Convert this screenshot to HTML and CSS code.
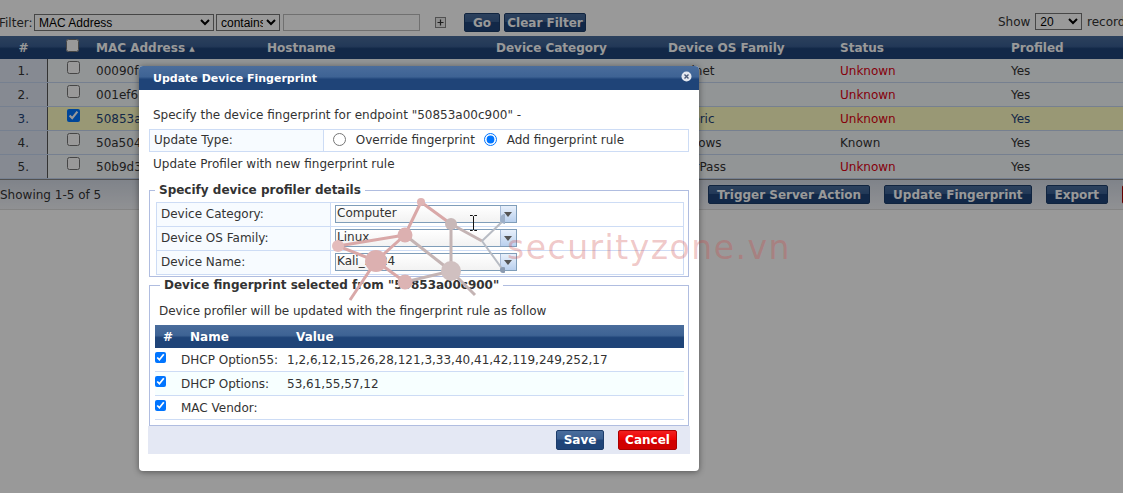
FILE: index.html
```html
<!DOCTYPE html>
<html lang="en">
<head>
    <meta charset="UTF-8">
    <meta name="viewport" content="width=device-width, initial-scale=1.0">
    <title>Endpoints</title>
    <link rel="stylesheet" href="styles.css">
</head>
<body>

    <div class="page">
        <div class="filter-bar">
            <div class="filter-left">
                <label class="filter-label">Filter:</label>
                <select class="sel-field"><option>MAC Address</option></select>
                <select class="sel-op"><option>contains</option></select>
                <input type="text" class="filter-input">
                <span class="plus-btn">
                    <svg width="11" height="11" viewBox="0 0 11 11"><rect x="0.5" y="0.5" width="10" height="10" fill="#eee" stroke="#888"/><path d="M5.5 2.5v6M2.5 5.5h6" stroke="#333" stroke-width="1.2"/></svg>
                </span>
                <button class="btn btn-go">Go</button>
                <button class="btn btn-clear">Clear Filter</button>
            </div>
            <div class="filter-show">Show <select class="sel-show"><option>20</option></select> records</div>
        </div>

        <table class="grid">
            <thead>
                <tr>
                    <th class="col-num">#</th>
                    <th class="col-check"><input type="checkbox"></th>
                    <th class="col-mac">MAC Address <span class="sort">&#9650;</span></th>
                    <th class="col-host">Hostname</th>
                    <th class="col-cat">Device Category</th>
                    <th class="col-os">Device OS Family</th>
                    <th class="col-status">Status</th>
                    <th>Profiled</th>
                </tr>
            </thead>
            <tbody>
                <tr>
                    <td class="num">1.</td><td class="chk"><input type="checkbox"></td><td>00090f</td><td></td><td></td><td class="os-cell">Fortinet</td><td class="unknown">Unknown</td><td>Yes</td>
                </tr>
                <tr>
                    <td class="num">2.</td><td class="chk"><input type="checkbox"></td><td>001ef6</td><td></td><td></td><td></td><td class="unknown">Unknown</td><td>Yes</td>
                </tr>
                <tr class="selected">
                    <td class="num">3.</td><td class="chk"><input type="checkbox" checked></td><td>50853a</td><td></td><td></td><td class="os-cell">Generic</td><td class="unknown">Unknown</td><td>Yes</td>
                </tr>
                <tr>
                    <td class="num">4.</td><td class="chk"><input type="checkbox"></td><td>50a504</td><td></td><td></td><td class="os-cell">Windows</td><td>Known</td><td>Yes</td>
                </tr>
                <tr>
                    <td class="num">5.</td><td class="chk"><input type="checkbox"></td><td>50b9d3</td><td></td><td></td><td class="os-cell">ClearPass</td><td class="unknown">Unknown</td><td>Yes</td>
                </tr>
            </tbody>
        </table>

        <div class="grid-footer">
            <div class="grid-info">Showing 1-5 of 5</div>
            <button class="btn btn-foot">Trigger Server Action</button>
            <button class="btn btn-foot">Update Fingerprint</button>
            <button class="btn btn-foot">Export</button>
            <button class="btn btn-foot btn-delete">Delete</button>
        </div>
    </div>

    <div class="overlay"></div>

    <!-- Update fingerprint dialog -->
    <div class="modal">
        <div class="modal-title">
            <span>Update Device Fingerprint</span>
            <svg class="modal-close" width="11" height="11" viewBox="0 0 11 11"><circle cx="5.5" cy="5.5" r="5" fill="#e4e8f0"/><path d="M3.5 3.5l4 4M7.5 3.5l-4 4" stroke="#4a5a78" stroke-width="1.4"/></svg>
        </div>
        <div class="modal-body">
            <p class="intro">Specify the device fingerprint for endpoint "50853a00c900" -</p>
            <div class="update-type">
                <div class="ut-label">Update Type:</div>
                <div class="ut-value">
                    <label><input type="radio" name="utype"> Override fingerprint</label>
                    <label><input type="radio" name="utype" checked> Add fingerprint rule</label>
                </div>
            </div>
            <p class="update-note">Update Profiler with new fingerprint rule</p>

            <fieldset class="box box-details">
                <legend>Specify device profiler details</legend>
                <div class="detail-table">
                    <div class="detail-row">
                        <div class="detail-label">Device Category:</div>
                        <div class="detail-value"><div class="combo"><span class="combo-text">Computer</span><span class="combo-arrow"></span></div></div>
                    </div>
                    <div class="detail-row">
                        <div class="detail-label">Device OS Family:</div>
                        <div class="detail-value"><div class="combo"><span class="combo-text">Linux</span><span class="combo-arrow"></span></div></div>
                    </div>
                    <div class="detail-row">
                        <div class="detail-label">Device Name:</div>
                        <div class="detail-value"><div class="combo"><span class="combo-text">Kali_2024</span><span class="combo-arrow"></span></div></div>
                    </div>
                </div>
            </fieldset>

            <fieldset class="box box-print">
                <legend>Device fingerprint selected from "50853a00c900"</legend>
                <p class="print-note">Device profiler will be updated with the fingerprint rule as follow</p>
                <div class="print-head">
                    <span class="ph-num">#</span><span class="ph-name">Name</span><span>Value</span>
                </div>
                <div class="print-row">
                    <input type="checkbox" checked><span class="pr-name">DHCP Option55:</span><span>1,2,6,12,15,26,28,121,3,33,40,41,42,119,249,252,17</span>
                </div>
                <div class="print-row">
                    <input type="checkbox" checked><span class="pr-name">DHCP Options:</span><span>53,61,55,57,12</span>
                </div>
                <div class="print-row">
                    <input type="checkbox" checked><span class="pr-name">MAC Vendor:</span><span></span>
                </div>
            </fieldset>

            <div class="modal-actions">
                <button class="btn btn-save">Save</button>
                <button class="btn btn-cancel">Cancel</button>
            </div>
        </div>
    </div>

    <!-- Watermark over the dialog -->
    <div class="watermark">
        <svg class="wm-net" width="200" height="120" viewBox="0 0 200 120">
            <g fill="none" stroke-width="3">
                <path stroke="#d9a8a8" d="M116 6L100 39M116 6L146 28M100 39L33 50M100 39L71 65M71 65L100 86M33 50L71 65M71 65L45 104"/>
                <path stroke="#c4b4b4" d="M146 28L177 45M146 28V75M100 39L146 75M100 86L146 75M146 75L170 99"/>
                <path stroke="#b8bcc4" stroke-width="2" d="M177 45L200 23M177 45L198 74"/>
            </g>
            <circle cx="116" cy="6" r="4" fill="#e0b4b4"/>
            <circle cx="100" cy="39" r="7.5" fill="#dcb0b0"/>
            <circle cx="146" cy="28" r="6" fill="#c8b8b8"/>
            <circle cx="33" cy="50" r="6" fill="#e4bcbc"/>
            <circle cx="71" cy="65" r="11" fill="#dcb0b0"/>
            <circle cx="146" cy="75" r="10" fill="#d0c0c0"/>
            <circle cx="100" cy="86" r="7.5" fill="#dcb4b4"/>
            <circle cx="200" cy="23" r="5" fill="#9cafc8"/>
            <circle cx="198" cy="74" r="3" fill="#8a9ab0"/>
        </svg>
        <span class="wm-text">securityzone.vn</span>
    </div>

    <svg class="ibeam" width="9" height="16" viewBox="0 0 9 16"><path d="M1 .5h2.5L4.5 1.500 5.500.5H8M4.500 1.500v13M1 15.500h2.500l1-1 1 1H8" fill="none" stroke="#111"/></svg>

</body>
</html>
```

FILE: styles.css
```css
body {
    font-family: "DejaVu Sans", Verdana, sans-serif;
    font-size: 12px;
    color: #333;
    background-color: #fff;
    margin: 0;
    height: 493px;
    overflow: hidden;
}

.page {
    width: 1123px;
    height: 493px;
    overflow: hidden;
}

/* filter row */
.filter-bar {
    display: flex;
    height: 36px;
    align-items: flex-start;
}

.filter-left {
    width: 998px;
    flex-shrink: 0;
    display: flex;
    align-items: center;
    padding-top: 13px;
    height: 19px;
}

.filter-label {
    width: 35px;
    margin-left: -1px;
    flex-shrink: 0;
}

.filter-left select,
.filter-left input,
.filter-show select {
    font-family: "Liberation Sans", Arial, sans-serif;
    font-size: 12px;
    height: 17px;
    padding: 0;
    box-sizing: border-box;
    border: 1px solid #767676;
    border-radius: 0;
    background: #fff;
}

.sel-field { width: 180px; }
.sel-op { width: 64px; margin-left: 2px; }
.filter-left .filter-input { width: 137px; margin-left: 3px; border-color: #bbb; }
.plus-btn { display: flex; margin-left: 15px; margin-right: 18px; }

.filter-show {
    flex-shrink: 0;
    padding-top: 13px;
    white-space: nowrap;
}

.sel-show { width: 47px; margin: 0 1px; }

/* buttons */
.btn {
    font-family: "DejaVu Sans", Verdana, sans-serif;
    font-size: 12px;
    font-weight: bold;
    color: #fff;
    height: 19px;
    padding: 0;
    border: 1px solid #1c3c6a;
    border-radius: 2px;
    background: linear-gradient(#4a6d9c 0%, #3a5f92 45%, #1f4478 50%, #1f4478 100%);
    flex-shrink: 0;
}

.btn-go { width: 36px; }
.btn-clear { width: 82px; margin-left: 4px; }

/* main grid */
.grid {
    width: 1123px;
    table-layout: fixed;
    border-collapse: collapse;
}

.grid th {
    height: 23px;
    padding: 0;
    text-align: left;
    color: #fff;
    font-weight: bold;
    background: linear-gradient(#4a6d9c 0%, #3a5f92 45%, #1f4478 55%, #1f4478 100%);
}

.grid th input {
    margin: 0;
    display: block;
    margin-left: 19px;
    margin-bottom: 4px;
}

.col-num { width: 47px; text-align: center !important; }
.col-check { width: 49px; }
.col-mac { width: 171px; }
.col-host { width: 229px; }
.col-cat { width: 172px; }
.col-os { width: 172px; }
.col-status { width: 171px; }

.sort { font-size: 7px; vertical-align: 1px; }

.grid td {
    height: 23px;
    padding: 0;
    background-color: #f3f8fb;
    border-bottom: 1px solid #c5d5f0;
    white-space: nowrap;
}

.grid td.num {
    text-align: center;
    background-color: #e0e7f3;
    border-right: 1px solid #555;
}

.grid td.chk input {
    margin: 0 0 6px 19px;
    display: block;
}

.grid .selected td { background-color: #fffdc4; color: #1f4478; }
.grid .selected td.num { background-color: #e0e7f3; }
.grid .selected td.unknown,
.grid td.unknown { color: #e00012; }

.grid-footer {
    height: 31px;
    display: flex;
    align-items: center;
    background: linear-gradient(#d5dbe6, #f0f2f6);
    border-bottom: 1px solid #ddd;
    white-space: nowrap;
    border-top: 1px solid #888;
    box-sizing: border-box;
}

.grid-info { width: 708px; flex-shrink: 0; }
.btn-foot { padding: 0 8px; margin-right: 14px; }
.btn-delete {
    background: linear-gradient(#f04040 0%, #e00000 50%, #d00000 100%);
    border-color: #a00;
    margin-right: 0;
}

.overlay {
    position: absolute;
    top: 0;
    left: 0;
    width: 1123px;
    height: 493px;
    background-color: rgba(0, 0, 0, 0.4);
}

/* dialog */
.modal {
    position: absolute;
    left: 139px;
    top: 66px;
    width: 560px;
    height: 405px;
    background-color: #fff;
    border-radius: 4px;
    box-shadow: 0 1px 6px rgba(0, 0, 0, 0.45);
    overflow: hidden;
}

.modal-title {
    height: 24px;
    display: flex;
    align-items: center;
    justify-content: space-between;
    padding: 0 7px 0 14px;
    color: #fff;
    font-size: 11px;
    font-weight: bold;
    background: linear-gradient(#4a6d9c 0%, #3e6394 45%, #1f4478 55%, #1f4478 100%);
}

.modal-close { margin-bottom: 4px; }

.modal-body {
    padding: 0 10px;
}

.intro { margin: 18px 0 0 4px; line-height: 15px; }

.update-type {
    display: flex;
    margin-top: 6px;
    height: 23px;
    box-sizing: border-box;
    border: 1px solid #cddcf5;
    align-items: stretch;
}

.ut-label {
    width: 169px;
    padding-left: 4px;
    line-height: 21px;
    background-color: #f7fbff;
    border-right: 1px solid #cddcf5;
}

.ut-value {
    display: flex;
    align-items: center;
    gap: 9px;
    padding-left: 9px;
}

.ut-value input { margin: 0 6px 2px 0; vertical-align: middle; }

.update-note { margin: 5px 0 0 4px; line-height: 15px; }

.box {
    margin: 0;
    padding: 0;
    border: 1px solid #b0bde0;
    min-width: 0;
}

.box legend {
    margin-left: 5px;
    padding: 0 4px;
    font-weight: bold;
    font-size: 12px;
    line-height: 15px;
}

.box-details { margin-top: 11px; height: 92px; }

.detail-table {
    margin: 4px 4px 0 6px;
    border: 1px solid #cddcf5;
    border-bottom: 0;
}

.detail-row {
    display: flex;
    height: 23px;
    border-bottom: 1px solid #cddcf5;
}

.detail-label {
    width: 169px;
    padding-left: 4px;
    line-height: 22px;
    background-color: #f7fbff;
    border-right: 1px solid #cddcf5;
}

.detail-value { padding: 2px 0 0 4px; }

.combo {
    width: 182px;
    height: 18px;
    box-sizing: border-box;
    display: flex;
    border: 1px solid #7f9db9;
    background: linear-gradient(#fff, #f2f2f2);
}

.combo-text { flex: 1; line-height: 14px; padding-left: 1px; }

.combo-arrow {
    position: relative;
    width: 15px;
    background: linear-gradient(#e8f0fb, #b9d0ee);
    border-left: 1px solid #a8bcd8;
}

.combo-arrow::after {
    content: "";
    position: absolute;
    left: 3px;
    top: 6px;
    border-left: 4px solid transparent;
    border-right: 4px solid transparent;
    border-top: 5px solid #555;
}

.box-print { margin-top: 1px; height: 146px; padding: 0 4px 0 5px; }

.print-note { margin: 11px 0 0 4px; line-height: 15px; }

.print-head {
    display: flex;
    align-items: center;
    margin-top: 6px;
    height: 23px;
    color: #fff;
    font-weight: bold;
    background: linear-gradient(#4a6d9c 0%, #3e6394 45%, #1f4478 55%, #1f4478 100%);
}

.ph-num { width: 35px; padding-left: 8px; box-sizing: border-box; }
.ph-name { width: 106px; }

.print-row {
    display: flex;
    align-items: center;
    height: 23px;
    background-color: #f7ffff;
    border-bottom: 1px solid #cddcf5;
    box-sizing: content-box;
}

.print-row:nth-child(even) { background-color: #fff; }

.print-row input { margin: 0 15px 4px 0; width: 11px; height: 11px; }
.pr-name { width: 106px; flex-shrink: 0; }

.modal-actions {
    display: flex;
    justify-content: flex-end;
    align-items: center;
    gap: 14px;
    height: 28px;
    padding-right: 13px;
    background-color: #e4e8f4;
    margin-left: -1px;
    margin-right: -1px;
}

.btn-save { width: 48px; height: 20px; }
.btn-cancel {
    width: 59px;
    height: 20px;
    background: linear-gradient(#f02020 0%, #f00000 48%, #d00000 52%, #d00000 100%);
    border-color: #a00;
}

/* watermark */
.watermark {
    position: absolute;
    left: 305px;
    top: 196px;
    pointer-events: none;
}

.wm-net { display: block; }

.wm-text {
    position: absolute;
    left: 202px;
    top: 32px;
    white-space: nowrap;
    font-size: 33px;
    letter-spacing: 1.5px;
    color: rgba(205, 70, 70, 0.3);
}

.ibeam {
    position: absolute;
    left: 469px;
    top: 215px;
}
```
